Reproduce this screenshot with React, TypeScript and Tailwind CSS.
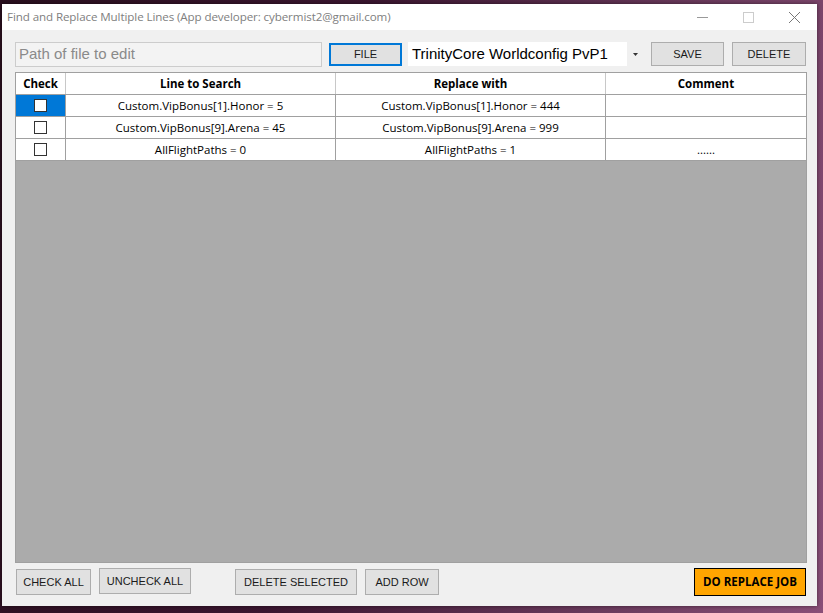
import React from "react";

const rows = [
  { line: "Custom.VipBonus[1].Honor = 5", repl: "Custom.VipBonus[1].Honor = 444", comment: "", selected: true },
  { line: "Custom.VipBonus[9].Arena = 45", repl: "Custom.VipBonus[9].Arena = 999", comment: "", selected: false },
  { line: "AllFlightPaths = 0", repl: "AllFlightPaths = 1", comment: "......", selected: false },
];

const winBtn =
  "h-[24px] border border-[#adadad] bg-[#e1e1e1] text-[11px] text-[#1a1a1a] font-['Liberation_Sans',Arial,sans-serif] flex items-center justify-center";

function CheckBox() {
  return <div className="w-[13px] h-[13px] border border-[#333] bg-white" />;
}

export default function App() {
  return (
    <div className="w-[823px] h-[613px] overflow-hidden bg-[linear-gradient(100deg,#2a0f1e_0%,#3b1630_40%,#6a3a5c_75%,#8a4f78_100%)] pt-[4px] pl-[2px]">
      <div className="w-[815px] h-[602px] flex flex-col bg-[#f0f0f0] shadow-[0_0_4px_rgba(0,0,0,0.5)]">
        {/* title bar */}
        <div className="h-[26px] bg-white flex items-center shrink-0">
          <div className="pl-[5px] flex-1 text-[11.6px] text-[#808080] font-['Open_Sans','Noto_Sans',sans-serif] tracking-[-0.1px]">
            Find and Replace Multiple Lines (App developer: cybermist2@gmail.com)
          </div>
          <div className="flex h-full">
            <div className="w-[46px] flex items-center justify-center">
              <svg width="11" height="11" viewBox="0 0 11 11">
                <line x1="0" y1="5.5" x2="11" y2="5.5" stroke="#999" strokeWidth="1" />
              </svg>
            </div>
            <div className="w-[46px] flex items-center justify-center">
              <svg width="11" height="11" viewBox="0 0 11 11">
                <rect x="0.5" y="0.5" width="10" height="10" fill="none" stroke="#ccc" strokeWidth="1" />
              </svg>
            </div>
            <div className="w-[46px] flex items-center justify-center">
              <svg width="11" height="11" viewBox="0 0 11 11">
                <path d="M0 0L11 11M11 0L0 11" stroke="#777" strokeWidth="1" />
              </svg>
            </div>
          </div>
        </div>

        {/* toolbar */}
        <div className="flex items-center pl-[13px] pt-[12px] h-[36px] shrink-0">
          <div className="w-[307px] h-[25px] border border-[#cccccc] bg-[#f3f3f3] flex items-center pl-[3px] text-[15px] text-[#8a8a8a] font-['Liberation_Sans',Arial,sans-serif]">
            Path of file to edit
          </div>
          <div className="ml-[7px] w-[73px] h-[23px] border-2 border-[#0078d7] bg-[#e1e1e1] flex items-center justify-center text-[11px] text-[#1a1a1a] font-['Liberation_Sans',Arial,sans-serif]">
            FILE
          </div>
          <div className="ml-[6px] w-[235px] h-[24px] bg-white flex items-center">
            <div className="flex-1 pl-[4px] text-[15px] text-black font-['Liberation_Sans',Arial,sans-serif]">
              TrinityCore Worldconfig PvP1
            </div>
            <div className="w-[16px] h-full bg-[#f0f0f0] flex items-center justify-center">
              <svg width="5" height="3" viewBox="0 0 5 3">
                <path d="M0 0H5L2.5 3Z" fill="#333" />
              </svg>
            </div>
          </div>
          <div className={`${winBtn} ml-[8px] w-[73px]`}>SAVE</div>
          <div className={`${winBtn} ml-[8px] w-[74px]`}>DELETE</div>
        </div>

        {/* grid */}
        <div className="ml-[13px] mt-[6px] w-[792px] h-[491px] bg-[#ababab] border border-[#a0a0a0] flex flex-col shrink-0 font-['Open_Sans','Noto_Sans',sans-serif] text-[11.5px] text-black">
          <div className="flex h-[22px] bg-white border-b border-[#a0a0a0] font-bold">
            <div className="w-[50px] border-r border-[#c8c8c8] flex items-center justify-center">Check</div>
            <div className="w-[270px] border-r border-[#c8c8c8] flex items-center justify-center">Line to Search</div>
            <div className="w-[270px] border-r border-[#c8c8c8] flex items-center justify-center">Replace with</div>
            <div className="flex-1 flex items-center justify-center">Comment</div>
          </div>
          {rows.map((r, i) => (
            <div key={i} className="flex h-[22px] bg-white border-b border-[#a0a0a0]">
              <div className={`w-[50px] border-r border-[#a0a0a0] flex items-center justify-center ${r.selected ? "bg-[#0078d7]" : ""}`}>
                <CheckBox />
              </div>
              <div className="w-[270px] border-r border-[#a0a0a0] flex items-center justify-center">{r.line}</div>
              <div className="w-[270px] border-r border-[#a0a0a0] flex items-center justify-center">{r.repl}</div>
              <div className="flex-1 flex items-center justify-center">{r.comment}</div>
            </div>
          ))}
        </div>

        {/* bottom buttons */}
        <div className="flex items-center pl-[14px] pt-[5px]">
          <div className={`${winBtn} w-[75px] h-[26px]`}>CHECK ALL</div>
          <div className={`${winBtn} ml-[8px] w-[92px] h-[26px] -mt-[2px]`}>UNCHECK ALL</div>
          <div className={`${winBtn} ml-[44px] w-[122px] h-[26px]`}>DELETE SELECTED</div>
          <div className={`${winBtn} ml-[8px] w-[74px] h-[26px]`}>ADD ROW</div>
          <div className="ml-[255px] w-[112px] h-[28px] bg-[#ffa500] border border-black flex items-center justify-center text-[11.5px] font-bold text-black font-['Open_Sans','Noto_Sans',sans-serif]">
            DO REPLACE JOB
          </div>
        </div>
      </div>
    </div>
  );
}
